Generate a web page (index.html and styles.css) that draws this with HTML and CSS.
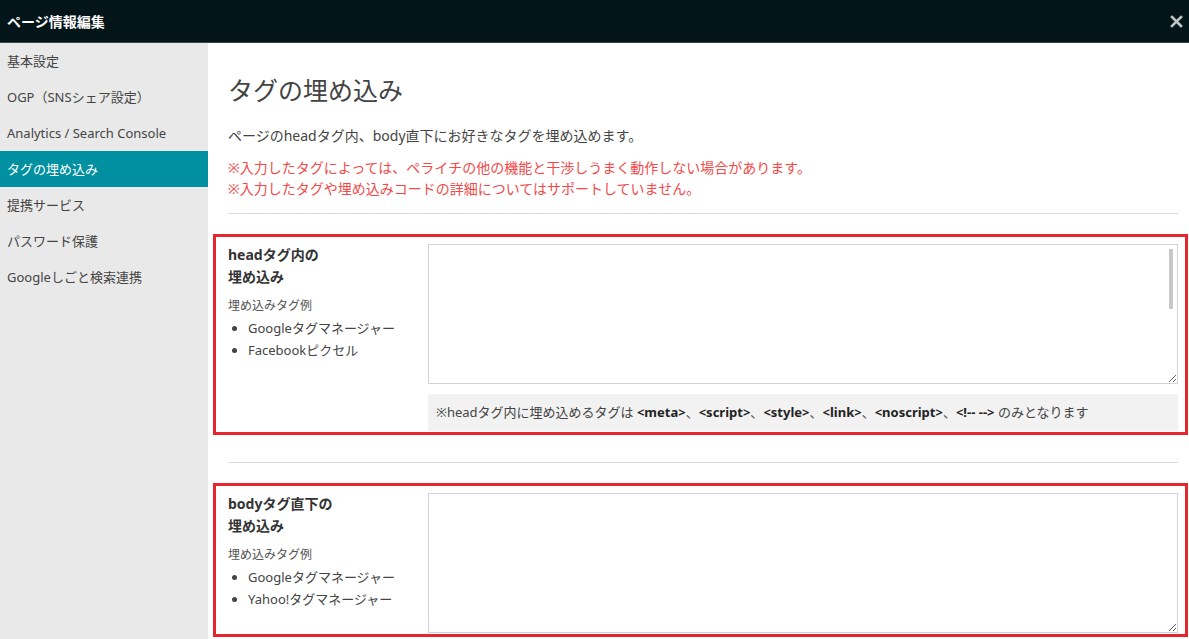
FILE: index.html
```html
<!DOCTYPE html>
<html lang="ja">
<head>
    <meta charset="UTF-8">
    <meta name="viewport" content="width=device-width, initial-scale=1.0">
    <title>ページ情報編集</title>
    <link rel="stylesheet" href="styles.css">
</head>
<body>
    <header class="topbar">
        <h1 class="topbar-title">ページ情報編集</h1>
        <button class="close-button" aria-label="閉じる">
            <svg width="13" height="13" viewBox="0 0 13 13">
                <path d="M2 2 L11 11 M11 2 L2 11" stroke="#bfc4c5" stroke-width="2.6" stroke-linecap="square"/>
            </svg>
        </button>
    </header>
    <div class="layout">
        <nav class="sidebar">
            <a class="nav-item" href="#">基本設定</a>
            <a class="nav-item" href="#">OGP（SNSシェア設定）</a>
            <a class="nav-item" href="#">Analytics / Search Console</a>
            <a class="nav-item active" href="#">タグの埋め込み</a>
            <a class="nav-item" href="#">提携サービス</a>
            <a class="nav-item" href="#">パスワード保護</a>
            <a class="nav-item" href="#">Googleしごと検索連携</a>
        </nav>
        <main class="content">
            <h2 class="page-title">タグの埋め込み</h2>
            <p class="lead">ページのheadタグ内、body直下にお好きなタグを埋め込めます。</p>
            <p class="warning">※入力したタグによっては、ペライチの他の機能と干渉しうまく動作しない場合があります。<br>※入力したタグや埋め込みコードの詳細についてはサポートしていません。</p>
            <hr class="divider">

            <section class="embed-row">
                <div class="embed-label">
                    <h3 class="embed-title">headタグ内の<br>埋め込み</h3>
                    <p class="example-title">埋め込みタグ例</p>
                    <ul class="example-list">
                        <li>Googleタグマネージャー</li>
                        <li>Facebookピクセル</li>
                    </ul>
                </div>
                <div class="embed-field">
                    <div class="textarea-wrap">
                        <textarea class="code-input"></textarea>
                        <span class="scroll-thumb"></span>
                    </div>
                    <p class="note">※headタグ内に埋め込めるタグは <b>&lt;meta&gt;</b>、<b>&lt;script&gt;</b>、<b>&lt;style&gt;</b>、<b>&lt;link&gt;</b>、<b>&lt;noscript&gt;</b>、<b>&lt;!-- --&gt;</b> のみとなります</p>
                </div>
            </section>

            <hr class="divider divider-between">

            <section class="embed-row">
                <div class="embed-label">
                    <h3 class="embed-title">bodyタグ直下の<br>埋め込み</h3>
                    <p class="example-title">埋め込みタグ例</p>
                    <ul class="example-list">
                        <li>Googleタグマネージャー</li>
                        <li>Yahoo!タグマネージャー</li>
                    </ul>
                </div>
                <div class="embed-field">
                    <div class="textarea-wrap">
                        <textarea class="code-input"></textarea>
                    </div>
                </div>
            </section>
        </main>
    </div>
</body>
</html>
```

FILE: styles.css
```css
body {
    margin: 0;
    height: 100vh;
    display: flex;
    flex-direction: column;
    overflow: hidden;
    font-family: "Noto Sans", "Noto Sans CJK JP", sans-serif;
    color: #333;
    background-color: #fff;
}

.topbar {
    flex: none;
    height: 42px;
    display: flex;
    align-items: center;
    justify-content: space-between;
    padding: 0 6px 0 7px;
    background-color: #04151a;
    border-bottom: 1px solid #3a4448;
}

.topbar-title {
    margin: 0;
    font-size: 14px;
    font-weight: bold;
    color: #fff;
}

.close-button {
    border: none;
    background: none;
    padding: 0;
    width: 13px;
    height: 13px;
    cursor: pointer;
}

.close-button svg {
    display: block;
}

.layout {
    flex: 1;
    display: flex;
    min-height: 0;
}

.sidebar {
    flex: none;
    width: 208px;
    background-color: #e9e9e9;
    display: flex;
    flex-direction: column;
}

.nav-item {
    display: block;
    height: 36px;
    line-height: 36px;
    padding: 0 7px;
    font-size: 13px;
    color: #444;
    text-decoration: none;
}

.nav-item.active {
    background-color: #0090a0;
    color: #fff;
}

.content {
    flex: 1;
    padding: 0 11px 0 20px;
    overflow: hidden;
}

.page-title {
    margin: 30px 0 0;
    font-size: 25px;
    line-height: 34px;
    font-weight: normal;
    color: #444;
}

.lead {
    margin: 18px 0 0;
    font-size: 14px;
    line-height: 22px;
    color: #444;
}

.warning {
    margin: 10px 0 0;
    font-size: 14px;
    line-height: 21px;
    color: #f24a4a;
}

.divider {
    margin: 14px 0 20px;
    border: none;
    border-top: 1px solid #dcdcdc;
}

.divider-between {
    margin-top: 27px;
}

.embed-row {
    display: flex;
    margin: 0 -10px 0 -15px;
    padding: 7px 7px 1px 12px;
    border: 3px solid #e5272d;
}

.embed-label {
    flex: none;
    width: 200px;
}

.embed-title {
    margin: 0;
    font-size: 14px;
    line-height: 22px;
    font-weight: bold;
    color: #333;
}

.example-title {
    margin: 8px 0 0;
    font-size: 12px;
    line-height: 20px;
    color: #555;
}

.example-list {
    margin: 1px 0 0;
    padding-left: 20px;
    font-size: 13px;
    line-height: 22px;
    color: #444;
}

.embed-field {
    flex: 1;
}

.textarea-wrap {
    position: relative;
}

.code-input {
    display: block;
    box-sizing: border-box;
    width: 100%;
    height: 140px;
    margin: 0;
    border: 1px solid #d4d4d4;
    resize: vertical;
    font-family: "Liberation Mono", monospace;
}

.scroll-thumb {
    position: absolute;
    top: 5px;
    right: 5px;
    width: 4px;
    height: 60px;
    background-color: #c8c8c8;
}

.note {
    margin: 10px 0 0;
    padding: 0 8px;
    height: 37px;
    line-height: 37px;
    font-size: 13px;
    color: #444;
    background-color: #f2f2f2;
    white-space: nowrap;
}

.note b {
    color: #222;
}
```
